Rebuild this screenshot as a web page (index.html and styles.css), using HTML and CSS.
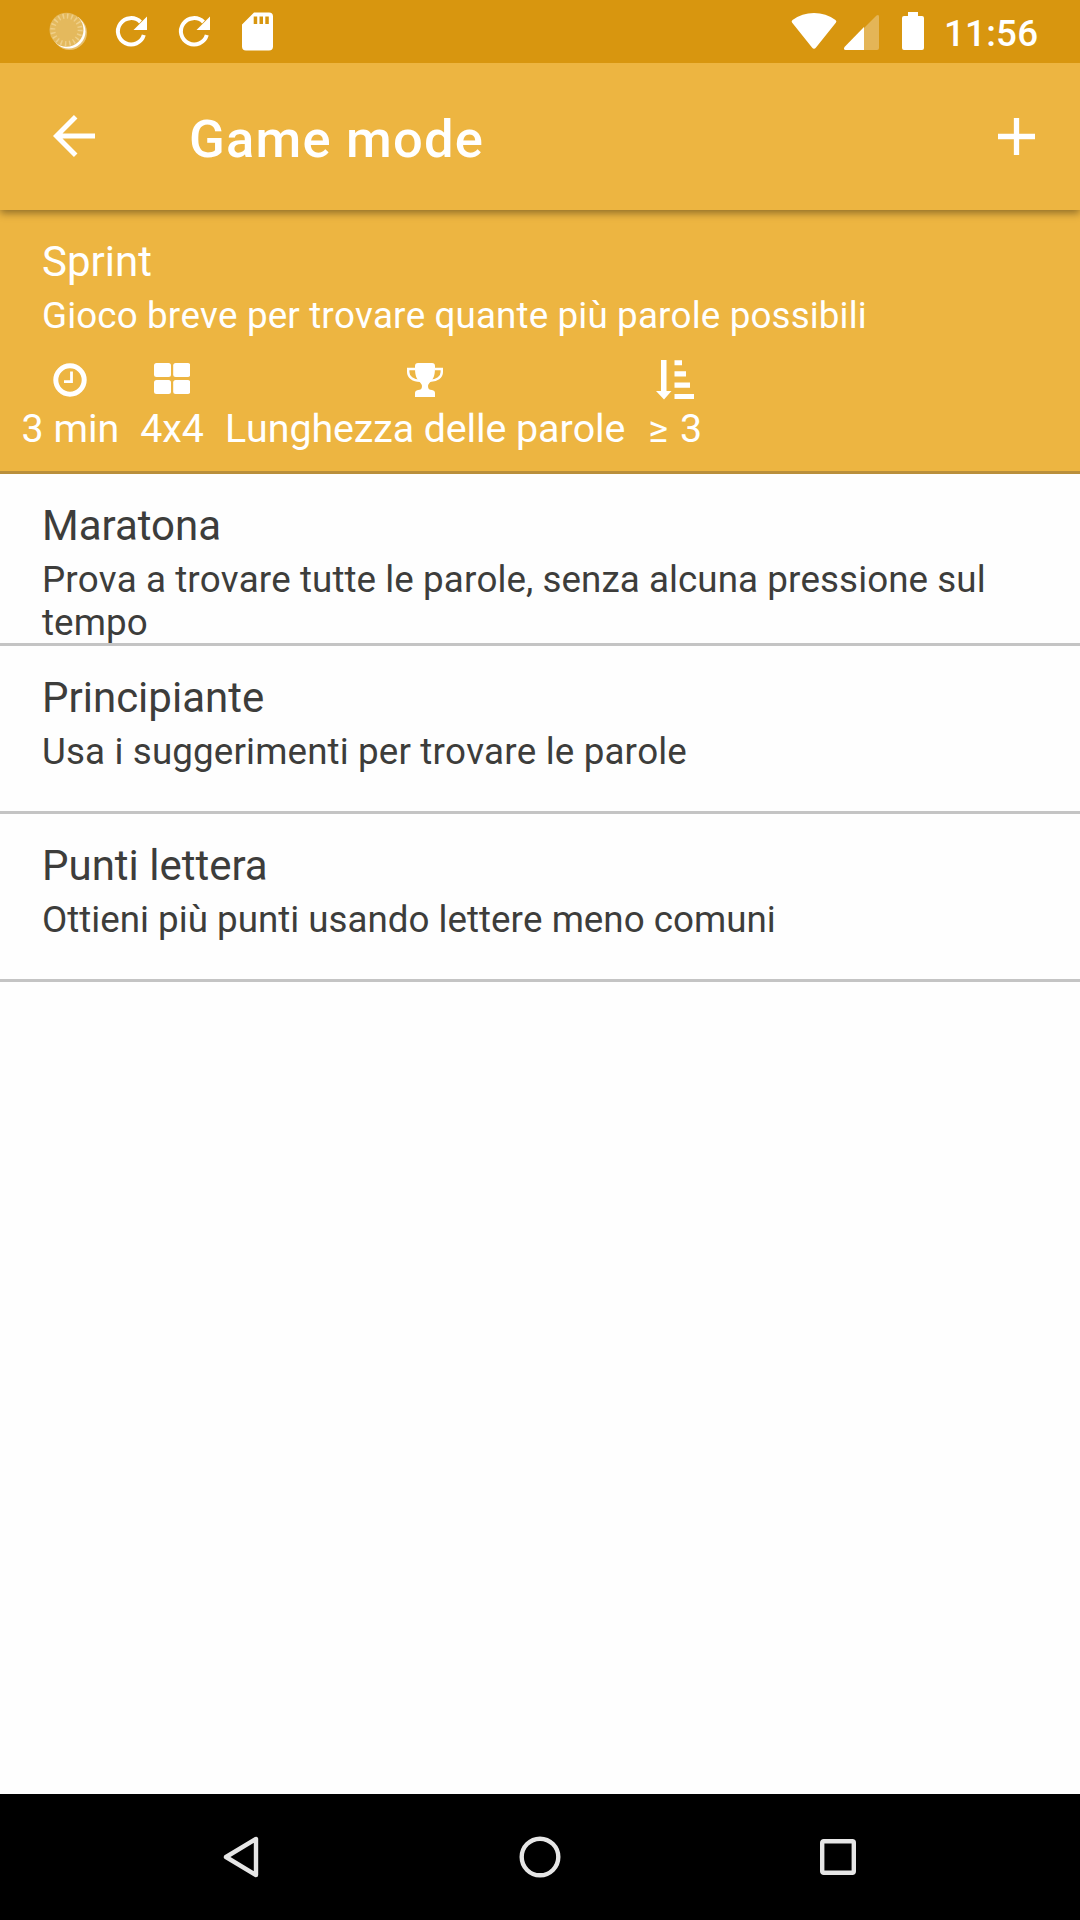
FILE: index.html
```html
<!DOCTYPE html>
<html lang="it">
<head>
<meta charset="utf-8">
<title>Game mode</title>
<link rel="stylesheet" href="styles.css">
</head>
<body>
<header class="status">
  <svg class="status-left" width="300" height="63" viewBox="0 0 300 63" fill="#fff">
    <circle cx="69.5" cy="32.500" r="17.500" opacity=".4"/>
    <circle cx="68.500" cy="31.500" r="17"/>
    <circle cx="66.500" cy="29.800" r="17" fill="#e4b95d"/>
    <circle cx="66.500" cy="29.800" r="13.700" fill="none" stroke="#efcf88" stroke-width="5" stroke-dasharray="1.500 2.804"/>
    <g id="refresh" fill="none" stroke="#fff" stroke-width="4">
      <path d="M143.800 35A13.200 13.200 0 1 1 140.500 22"/>
      <path d="M147 16.500V30H133.500Z" fill="#fff" stroke="none"/>
    </g>
    <use href="#refresh" x="63"/>
    <path fill-rule="evenodd" d="M254 12.500H269Q273 12.500 273 16.500V46.500Q273 50.500 269 50.500H246Q242 50.500 242 46.500V24.500ZM253.700 16.500V24H257.200V16.500ZM259.500 16.500V24H263V16.500ZM265.300 16.500V24H268.800V16.500Z"/>
  </svg>
  <svg class="status-right" width="140" height="63" viewBox="785 0 140 63" fill="#fff">
    <path d="M792 22.500Q791 21 792.500 20Q802 13 814 13T835.500 20Q837 21 836 22.500L816 47.500Q814 50 812 47.500Z"/>
    <path d="M864 28L876.500 15.500Q879 14 879 16.500V48Q879 50 877 50H864Z" opacity=".3"/>
    <path d="M864 27V50H845.500Q843 49.500 844.500 47Z"/>
    <path d="M908 12H918V16H922Q924 16 924 18V48Q924 50 922 50H904Q902 50 902 48V18Q902 16 904 16H908Z"/>
  </svg>
  <span class="time">11:56</span>
</header>
<div class="appbar">
  <svg class="back" width="42" height="42" viewBox="0 0 42 42" fill="none" stroke="#fff" stroke-width="5"><path d="M42 21H4M22.700 1.800L3.500 21L22.700 40.200"/></svg>
  <h1 class="title">Game mode</h1>
  <svg class="add" width="37" height="37" viewBox="0 0 37 37" fill="none" stroke="#fff" stroke-width="5.300"><path d="M18.500 0V37M0 18.500H37"/></svg>
</div>
<main class="list">
  <section class="item selected">
    <h2 class="name">Sprint</h2>
    <p class="desc spaced">Gioco breve per trovare quante più parole possibili</p>
    <div class="facts">
      <div class="fact">
        <svg width="34" height="42" viewBox="0 0 34 42" fill="none" stroke="#fff"><circle cx="17" cy="21" r="14.200" stroke-width="5"/><path d="M18.500 12.500V22.700H11" stroke-width="2.800"/></svg>
        <span>3 min</span>
      </div>
      <div class="fact">
        <svg width="36" height="42" viewBox="0 0 36 42" fill="#fff"><rect y="4" width="17" height="14" rx="2.500"/><rect x="19.200" y="4" width="17" height="14" rx="2.500"/><rect y="21" width="17" height="14" rx="2.500"/><rect x="19.200" y="21" width="17" height="14" rx="2.500"/></svg>
        <span>4x4</span>
      </div>
      <div class="fact scoring">
        <svg width="36" height="42" viewBox="0 0 36 42" fill="#fff"><path d="M8 10H1.200V13C1.200 18 6 21.800 13 21.800M28 10H34.800V13C34.800 18 30 21.800 23 21.800" fill="none" stroke="#fff" stroke-width="2.400"/><path d="M11 4H25Q28 4 28 7C28 12 28 17.500 25 21C22.500 24 21 25 21 27C21 30 22.500 31 25 31Q28 31.500 28 34V38H8V34Q8 31.500 11 31C13.500 31 15 30 15 27C15 25 13.500 24 11 21C8 17.500 8 12 8 7Q8 4 11 4Z"/></svg>
        <span>Lunghezza delle parole</span>
      </div>
      <div class="fact minimum">
        <svg width="38" height="42" viewBox="0 0 38 42" fill="#fff"><path d="M5 1H10.500V32H15.500L8 40.500L0 32H5ZM18.500 1.300H26V6.300H18.500ZM18.500 12.300H30V17.500H18.500ZM18.500 23.500H34V28.700H18.500ZM18.500 35H38V40H18.500Z"/></svg>
        <span><span class="gte">≥</span> 3</span>
      </div>
    </div>
  </section>
  <section class="item">
    <h2 class="name">Maratona</h2>
    <p class="desc spaced-half">Prova a trovare tutte le parole, senza alcuna pressione sul tempo</p>
  </section>
  <section class="item">
    <h2 class="name">Principiante</h2>
    <p class="desc spaced">Usa i suggerimenti per trovare le parole</p>
  </section>
  <section class="item">
    <h2 class="name">Punti lettera</h2>
    <p class="desc">Ottieni più punti usando lettere meno comuni</p>
  </section>
</main>
<nav class="navbar">
  <svg width="36" height="42" viewBox="0 0 36 42"><path d="M33 3V39L3 21Z"/></svg>
  <svg width="42" height="42" viewBox="0 0 42 42"><circle cx="21" cy="21" r="18.300"/></svg>
  <svg width="36" height="42" viewBox="0 0 36 42"><rect x="2.200" y="5.200" width="31.600" height="31.600" rx="1.500"/></svg>
</nav>
</body>
</html>
```
FILE: styles.css
```css
* { box-sizing: border-box; }
body {
  margin: 0;
  width: 1080px;
  height: 1920px;
  display: flex;
  flex-direction: column;
  background: #fefefe;
  color: #3d3d3b;
  font-family: Roboto, sans-serif;
  font-kerning: none;
  overflow: hidden;
}
svg { display: block; flex: none; }
h1, h2, p { margin: 0; font-weight: 400; }
.status {
  height: 63px;
  flex: none;
  display: flex;
  background: #d8960f;
  color: #fff;
  z-index: 2;
}
.status-right { margin-left: auto; }
.time {
  width: 155px;
  padding: 12px 0 0 19px;
  font-size: 36.75px;
  line-height: 43px;
  font-weight: 500;
  letter-spacing: 0.2px;
}
.appbar {
  height: 147px;
  flex: none;
  display: flex;
  align-items: center;
  padding: 0 45px 0 53px;
  background: #edb541;
  color: #fff;
  z-index: 1;
  box-shadow: 0 3px 8px rgba(0, 0, 0, 0.4);
}
.back, .add { margin-bottom: 1px; }
.title {
  margin-left: 94px;
  padding-top: 4px;
  font-size: 52.5px;
  font-weight: 500;
  letter-spacing: 1.2px;
}
.add { margin-left: auto; }
.list { flex: 1; }
.item {
  min-height: 168px;
  padding: 27px 42px 0;
  border-bottom: 3px solid #c4c4c4;
}
.selected {
  height: 264px;
  background: #edb541;
  border-color: #b98f3c;
  color: #fff;
}
.name { font-size: 42px; line-height: 49px; font-kerning: normal; }
.desc { margin: 8px 0 -1px; font-size: 36.75px; line-height: 43px; }
.spaced { letter-spacing: 0.14px; }
.spaced-half { letter-spacing: 0.07px; }
.facts {
  display: flex;
  gap: 21px;
  margin: 23px 0 0 -20.500px;
}
.fact {
  display: flex;
  flex-direction: column;
  align-items: center;
  gap: 5px;
  font-size: 39.375px;
  line-height: 46px;
  white-space: nowrap;
}
.scoring { letter-spacing: -0.08px; }
.gte {
  display: inline-block;
  width: 22px;
  font-size: 38px;
  line-height: 1;
}
.minimum { margin-left: 2px; }
.navbar {
  height: 126px;
  flex: none;
  display: flex;
  align-items: center;
  justify-content: space-between;
  padding: 0 224px 0 223px;
  background: #000;
}
.navbar svg { fill: none; stroke: #e6e6e6; stroke-width: 4.4; stroke-linejoin: round; }
```
